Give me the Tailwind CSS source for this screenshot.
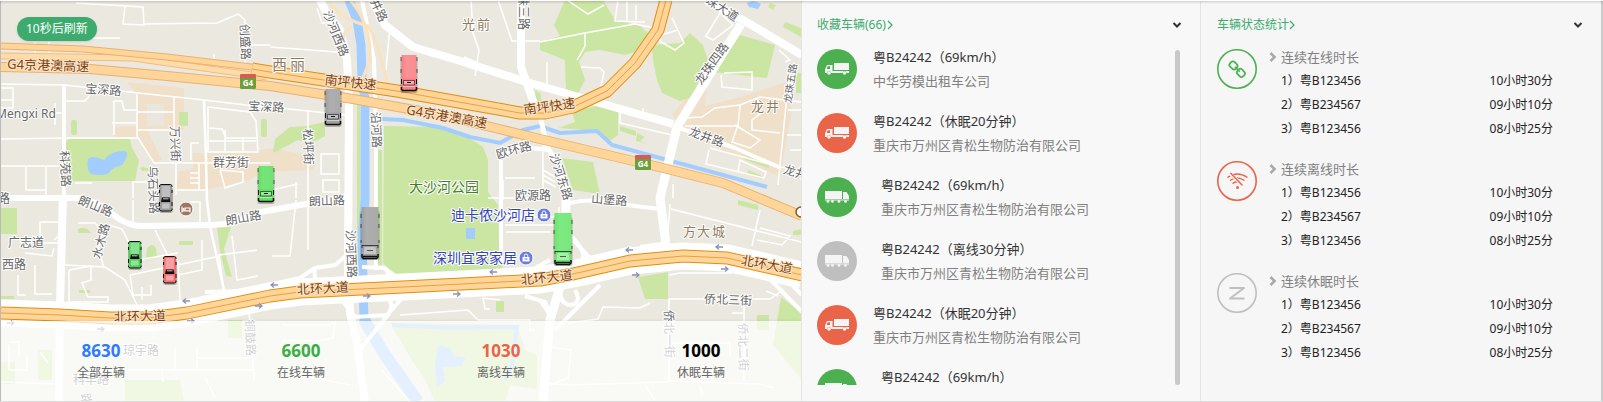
<!DOCTYPE html>
<html lang="zh-CN">
<head>
<meta charset="utf-8">
<meta name="viewport" content="width=device-width, initial-scale=1">
<title>车辆监控</title>
<script src="https://cdn.jsdelivr.net/npm/@tailwindcss/browser@4"></script>
</head>
<body class="font-['Noto_Sans','Noto_Sans_CJK_SC',sans-serif] text-[#333]">
<svg class="hidden" aria-hidden="true">
  <defs>
    <symbol id="truck-left" viewBox="0 0 24 12"><path fill="#f4f4f4" fill-rule="evenodd" d="M9 0h15v7H9zM2 2h5.500v6H24v2h-2.500a2 2 0 0 0-4 0H6a2 2 0 0 0-4 0H0V6.500zM2.600 3.200 1.800 6H5V3.200z"/><circle cx="4" cy="10" r="1.800" fill="#f4f4f4"/><circle cx="19.500" cy="10" r="1.800" fill="#f4f4f4"/></symbol>
    <symbol id="truck-right" viewBox="0 0 24 12"><path fill="#f4f4f4" d="M0 0h17v8H0zM18 1h3.500L24 5v3h-6zM0 8.600h24v1H0z"/><g fill="#f4f4f4"><circle cx="3" cy="10.400" r="1.400"/><circle cx="7.500" cy="10.400" r="1.400"/><circle cx="14" cy="10.400" r="1.400"/><circle cx="20.500" cy="10.400" r="1.400"/></g></symbol>
    <symbol id="chev-down" viewBox="0 0 10 10"><path d="M1.500 3 5 6.500 8.500 3" fill="none" stroke="#333" stroke-width="2"/></symbol>
    <symbol id="chev-bold" viewBox="0 0 8 10"><path d="M1.500 1 5.500 5 1.500 9" fill="none" stroke="#a8a8a8" stroke-width="2.600"/></symbol>
    <symbol id="chev-thin" viewBox="0 0 6 10"><path d="M1 1 5 5 1 9" fill="none" stroke="#3cab6d" stroke-width="1.200"/></symbol>
  </defs>
</svg>

<main class="grid min-h-screen grid-cols-[801fr_399fr_403fr] border-b border-[#dcdcdc]">

  <!-- Map -->
  <section class="relative flex flex-col items-start justify-between overflow-hidden border-l border-[#bbb] bg-[#ebe9df]" aria-label="地图">
    <svg class="absolute inset-0 h-full w-full" viewBox="1 0 800 401" preserveAspectRatio="xMinYMin slice">
      <!-- Built-up areas -->
      <g fill="#f0e0ca">
        <path d="M127 82 184 88V130H147L162 160 153 163 137 137H114V127H137V95Z"/>
        <path d="M193 153 240 153 275 148 315 158 313 170 262 172 250 180 205 190H176L178 172 193 168Z"/>
        <path d="M695 87 707 85 705 106 740 97 786 82 792 110 780 177 685 133 672 115Z"/>
      </g>
      <path d="M147 104h17v22h-17z" fill="#e8e6dd"/>
      <!-- Parks -->
      <g fill="#cbe6a3">
        <path d="M66 142Q67 139 70 139H130L132 148 139 160 135 181H66Z"/>
        <rect x="71" y="120" width="6" height="15" rx="2"/><rect x="179" y="112" width="9" height="14"/><rect x="261" y="119" width="6" height="18" rx="2"/>
        <path d="M140 168q4-3 5 0 3-1 4 2-3 3-4 0-3 3-5-2Z"/>
        <path d="M275 139 290 127 306 126 325 122V136L312 143 298 140 273 153Z"/>
        <path d="M384 126 440 127 462 133 483 147 488 160V192L498 205 499 240 503 270 398 278 383 263Z"/>
        <path d="M357 96h3v170h-3zM378 150h4v115h-4z"/>
        <path d="M565 0H603L615 20 640 26 650 35 640 50 625 55 600 50 585 52 579 62 585 80 575 100 566 93 565 60 540 50V42L560 36 554 25Z"/>
        <path d="M652 45 680 43 690 33 703 45 708 60 692 97 680 101 662 93 657 80 653 60Z"/>
        <path d="M740 35 775 45 767 78 713 72 725 57Z"/>
        <path d="M572 112 600 105 618 108V135L608 142 597 131 558 128 575 122Z"/>
        <path d="M562 158 593 162 600 194 573 190Z"/>
        <path d="M620 126 636 131V136L620 131ZM637 133 645 137 640 141 648 144 636 141Z"/>
        <path d="M785 22 801 28V37L783 27ZM796 73h6v20h-6zM770 3l6 2-3 5-5-3ZM535 90l6 4v10l-5-4Z"/>
        <path d="M746 156 769 164V168L745 160ZM748 170 762 176V179L747 174Z"/>
        <path d="M1 208h16v26H1zM78 229q8-4 13 4h-13zM147 248q6-6 9 0l1 9-11 3ZM179 241h14v4h-14zM217 227h14l-7 22 8 28-6-1-6-25Z"/>
        <path d="M1 296h13v3H1zM79 290h11v3H79z"/>
        <path d="M638 277 668 272V299H645ZM781 297 802 313V380L773 345ZM757 315h12v15h-12zM496 301h8v11h-8zM738 200l20 5v5l-20-5ZM793 231l8-2v6h-8z"/>
        <path d="M125 380H180L184 402H125ZM228 320h14v18h-14zM38 350h14v30H38zM1 362h14v22H1z"/>
        <path d="M390 323 517 325 525 350 537 355V389L510 385 505 402H435L425 380 410 357Z"/>
      </g>
      <!-- Water -->
      <g fill="#a3ccff">
        <path d="M88 159C92 155 98 158 104 160 110 152 118 151 125 151 129 152 127 158 122 165 116 167 112 168 109 173 105 176 95 175 91 174 87 170 87 163 88 159Z"/>
        <path d="M747 3q6-4 14 1l-3 5-9-2ZM466 228h9v11h-9z"/>
        <path d="M438 345l12 3 4 8 12 2-5 8-18 1 2 14-8 6-2-22Z"/>
      </g>
      <g fill="none" stroke="#a3ccff">
        <path stroke-width="9" d="M349 0 357 20 361 45 362 80 365 100V200L362 240 364 322"/>
        <path stroke-width="12" d="M364 320 385 355 418 402"/>
        <path stroke-width="4" d="M382 119 403 120 443 128 470 137 500 143 523 130 540 126 560 133 597 131 612 145 767 187"/>
        <path stroke-width="4" d="M392 325 450 328 517 327 512 365 505 380"/>
      </g>
      <!-- Side streets -->
      <g fill="none" stroke="#fff" stroke-width="1.500">
        <path d="M76 3 143 7 144 25 123 24 125 6M144 24 217 23 238 14 245 20V70M245 45H270M50 38H120M35 42V54M49 42V54M214 54V62"/>
        <path d="M1 84 64 85 204 100 270 108M64 101H85L90 95M1 88h12v20H1M13 100H1M55 103v22M55 113h9M114 135V101H122L124 110H137M112 123H137M137 94V136L154 163M137 112H174M174 96V130H138M174 130V155M1 139 66 138H137"/>
        <path d="M208 107 250 112 256 121 258 152H208ZM208 128 222 129 226 138H258M208 141H256M225 130V152M243 137V152"/>
        <path d="M154 163H270M176 163V195M191 160V143H199M199 163V190M190 173H200M190 178H200M190 183H200M176 190H207M220 170 243 172V182L225 188 220 170M26 166V190H46V166M46 166V198M1 166H64M75 183H92M133 198V182H153"/>
        <path stroke-width="2.500" d="M204 100 206 160 207 200 210 226 224 290"/>
        <path d="M270 47 337 52M317 8 322 23 336 22M308 110V250M271 107 345 115M321 154H339V174H321ZM323 180H339V192H323ZM272 190 298 184M296 182V198M296 200 290 256H272"/>
        <path d="M471 0 473 33 479 50 475 76M464 57 480 64M498 0 512 41H540M390 25 386 70M499 0V2"/>
        <path d="M567 0 588 14 604 5M540 42 585 33 585 46 577 60M585 33 635 24 655 28M581 67 600 68 604 72 600 92M547 62V85M618 0 615 21 645 22M627 0V22M636 5V20M655 28 661 42 675 50 684 43 672 18M661 35 678 30"/>
        <path d="M706 36 720 13 733 25M705 36 713 40 733 25M721 75 722 87 752 90V72L724 73M779 50 790 60 785 62M790 65 778 185M765 110 752 120V130L780 133M685 118 702 117 715 108 740 105 760 97 801 102M685 126 738 126 740 106M735 125 760 140 750 148 732 142 738 125M788 110H801M787 135H801M790 150H801M710 148 780 167 801 170M709 150 706 164 764 178 766 172 740 160 738 172M620 113V123L672 135M643 115V108M673 184V198"/>
        <path d="M543 145V193M503 180V200M505 178H535M488 198H540M543 170 555 177M543 175 555 182M543 180 556 187M505 217H560M505 225H555M506 232H550M559 207V240"/>
        <path d="M64 232V222H40V243H58M64 232 54 240M25 253 52 256 54 248M35 265V294H52M18 275V295H26M64 265 105 267 125 280 138 307M78 223H95L103 232 98 248 104 268M109 225 122 229 138 260 178 253M133 200V224M155 230 168 256 178 262 180 300M130 275 220 256M130 275 133 295H151V285M142 300V287M69 270V302H108V297H88L82 283 91 280V266L69 270M178 275 202 270V240M224 292 219 255 257 250M232 236 237 280 258 276M190 202H200V226"/>
        <path d="M9 345V370H27V355M9 342H19V355M40 352 48 363M175 348V370H197V348M197 358H250M249 310 254 380M100 370H255M162 368 163 382M1 382 55 384M205 377 215 398M282 325H330L335 322 333 338 318 341 282 340V352M272 370 350 385M382 370 410 402M400 315 468 310 478 320H530V330H535M500 300 483 298 485 309 490 309"/>
        <path d="M669 299 668 350M669 275 680 273H732M669 299H770L783 290M766 291 778 296M744 303V380M732 313H744M668 343H730V356M568 323 598 319 603 307 640 308 650 303M550 347 571 350 568 378 550 385M668 381 760 384 774 388M645 385 655 400M669 345V382M700 385 702 395M668 230 670 204M671 209 801 242M760 210 752 246M760 228 790 236 782 245 757 240M540 383 570 385 668 382"/>
      </g>
      <!-- Ramps and interchanges -->
      <g fill="none" stroke="#fff" stroke-width="4">
        <path d="M268 285 300 278 315 268 335 265 347 255M315 270Q312 280 325 283M362 267 384 268 398 278M385 268Q393 280 385 285M340 298 355 317 387 315 403 297M387 298Q395 303 388 315L362 347 357 345"/>
        <path d="M570 235Q590 255 580 262L560 266M573 240 590 258 632 248M550 260 535 268M525 296 545 302 553 322M575 290Q582 302 572 305 560 305 560 290M600 285 555 330M540 300 550 315"/>
        <path d="M205 292 290 290M640 247 669 243M769 278 802 312M787 280 802 295"/>
      </g>
      <!-- Main roads -->
      <g fill="none" stroke="#fff" stroke-linejoin="round">
        <path stroke-width="4" d="M64 84V200"/>
        <path stroke-width="8" d="M63 195 60 305 59 402M320 0 327 14 340 30 347 60 349 100 348 270 350 313 357 343 365 402"/>
        <path stroke-width="6" d="M1 198H82L105 207Q122 225 140 226L212 225Q235 225 255 213L345 197"/>
        <path stroke-width="8" d="M372 0 385 25 413 47 457 60 530 83 673 124"/>
        <path stroke-width="8" d="M802 55 743 20 706 0"/>
        <path stroke-width="9" d="M741 24 700 90 677 127 660 198 666 245"/>
        <path stroke-width="8" d="M521 0V67L538 115"/>
        <path stroke-width="5" d="M540 115 547 147 560 167 567 200"/>
        <path stroke-width="9" d="M566 198 565 270 550 320 543 402"/>
        <path stroke-width="4" d="M362 0 374 60 376 130V270M570 203Q590 198 610 203L660 209M501 160V265M502 158Q510 148 522 147L550 150M677 127 735 148 781 168"/>
      </g>
      <g fill="none" stroke="#fbe2bf" stroke-width="3">
        <path d="M330 2Q338 18 368 26 380 45 388 88M350 0Q372 25 370 60L362 80M345 50Q340 30 352 27"/>
      </g>
      <!-- Beihuan Avenue -->
      <g fill="none" stroke-linejoin="round">
        <path stroke="#fff" stroke-width="27" d="M1 313 60 315 110 318H150L187 313 270 296 300 292 403 287 540 280 573 274 630 261 683 256 727 258 802 275"/>
        <path stroke="#e08e10" stroke-width="13" d="M1 313 60 315 110 318H150L187 313 270 296 300 292 403 287 540 280 573 274 630 261 683 256 727 258 802 275"/>
        <path stroke="#ffd599" stroke-width="11" d="M1 313 60 315 110 318H150L187 313 270 296 300 292 403 287 540 280 573 274 630 261 683 256 727 258 802 275"/>
        <path stroke="#e8a23c" d="M1 313 60 315 110 318H150L187 313 270 296 300 292 403 287 540 280 573 274 630 261 683 256 727 258 802 275"/>
      </g>
      <!-- Expressways -->
      <g fill="none" stroke-linejoin="round">
        <path stroke="#eebd84" stroke-width="7" d="M1 56 133 58 267 77"/><path stroke="#ffdba8" stroke-width="5" d="M1 56 133 58 267 77"/>
        <path stroke="#eab070" stroke-width="7" d="M1 46 83 49 167 57 260 68"/><path stroke="#ffd599" stroke-width="5" d="M1 46 83 49 167 57 260 68"/>
        <path stroke="#eab070" stroke-width="10" d="M1 67 90 69 167 76 270 86 353 99 437 114 540 139 663 168 723 183 802 216"/>
        <path stroke="#ffd599" stroke-width="8" d="M1 67 90 69 167 76 270 86 353 99 437 114 540 139 663 168 723 183 802 216"/>
        <path stroke="#e08e10" stroke-width="13" d="M252 69 270 72 397 91 470 104 520 113 545 113 573 107 607 91 635 63 658 30 666 0"/>
        <path stroke="#ffd599" stroke-width="11" d="M252 69 270 72 397 91 470 104 520 113 545 113 573 107 607 91 635 63 658 30 666 0"/>
        <path stroke="#e8a23c" d="M252 69 270 72 397 91 470 104 520 113 545 113 573 107 607 91 635 63 658 30 666 0"/>
      </g>
      <!-- One-way arrows -->
      <g fill="none" stroke="#8b93b8" stroke-width="1.300">
        <path d="M190 301h-7m3-2.500-3 2.500 3 2.500M278 285h-7m3-2.500-3 2.500 3 2.500M497 272h-7m3-2.500-3 2.500 3 2.500M633 250h-7m3-2.500-3 2.500 3 2.500M723 247h-7m3-2.500-3 2.500 3 2.500"/>
        <path d="M7 323h7m-3-2.500 3 2.500-3 2.500M97 329h7m-3-2.500 3 2.500-3 2.500M187 321h7m-3-2.500 3 2.500-3 2.500M255 306h7m-3-2.500 3 2.500-3 2.500M363 296h7m-3-2.500 3 2.500-3 2.500M453 294h7m-3-2.500 3 2.500-3 2.500M632 275h7m-3-2.500 3 2.500-3 2.500M721 269h7m-3-2.500 3 2.500-3 2.500"/>
      </g>
      <!-- Street labels -->
      <g font-size="12" fill="#666" stroke="#fff" stroke-width="2" stroke-linejoin="round" paint-order="stroke" text-anchor="middle">
        <text transform="translate(103 94) rotate(4)">宝深路</text>
        <text x="26" y="118">Mengxi Rd</text>
        <text transform="translate(241 42) rotate(88)">创盛路</text>
        <text transform="translate(266 111) rotate(3)">宝深路</text>
        <text transform="translate(61 169) rotate(87)">科苑路</text>
        <text transform="translate(171 144) rotate(88)">万兴街</text>
        <text x="231" y="167">群芳街</text>
        <text transform="translate(149 190) rotate(88)">乌石头路</text>
        <text transform="translate(94 210) rotate(22)">朗山路</text>
        <text x="4" y="203">路</text>
        <text transform="translate(244 222) rotate(-10)">朗山路</text>
        <text transform="translate(327 205) rotate(-2)">朗山路</text>
        <text transform="translate(105 242) rotate(-75)">水木路</text>
        <text x="26" y="247">广志道</text>
        <text x="14" y="269">西路</text>
        <text x="141" y="355">琼宇路</text>
        <text x="91" y="384">科丰路</text>
        <text transform="translate(82 400) rotate(80)">路</text>
        <text transform="translate(246 338) rotate(88)">铜鼓路</text>
        <text transform="translate(332 35) rotate(68)">沙河西路</text>
        <text transform="translate(347 254) rotate(88)">沙河西路</text>
        <text transform="translate(375 12) rotate(65)">井路</text>
        <text transform="translate(519 12) rotate(90)">珠三路</text>
        <text transform="translate(372 130) rotate(88)">沿河路</text>
        <text transform="translate(304 147) rotate(88)">松坪街</text>
        <text transform="translate(515 154) rotate(-15)">欧环路</text>
        <text x="533" y="200">欧源路</text>
        <text transform="translate(557 178) rotate(72)">沙河东路</text>
        <text transform="translate(609 204) rotate(4)">山堡路</text>
        <text transform="translate(720 12) rotate(32)">珠大道</text>
        <text transform="translate(715 66) rotate(-54)">龙珠四路</text>
        <text transform="translate(794 84) rotate(-82)" font-size="10">龙珠五路</text>
        <text transform="translate(705 141) rotate(20)">龙井路</text>
        <text transform="translate(800 178) rotate(16)">龙井路</text>
        <text transform="translate(728 304) rotate(2)">侨北三街</text>
        <text transform="translate(665 334) rotate(89)">侨北一街</text>
        <text transform="translate(739 347) rotate(89)">侨北二街</text>
      </g>
      <g font-size="13" fill="#7a3f12" stroke="#ffe9cc" stroke-width="2" stroke-linejoin="round" paint-order="stroke" text-anchor="middle">
        <text transform="translate(48 70) rotate(2)">G4京港澳高速</text>
        <text transform="translate(446 121) rotate(10)">G4京港澳高速</text>
        <text transform="translate(350 87) rotate(6)">南坪快速</text>
        <text transform="translate(550 111) rotate(-8)">南坪快速</text>
        <text transform="translate(140 321) rotate(-2)">北环大道</text>
        <text transform="translate(323 293) rotate(-3)">北环大道</text>
        <text transform="translate(547 282) rotate(-6)">北环大道</text>
        <text transform="translate(766 269) rotate(10)">北环大道</text>
      </g>
      <g font-size="13" fill="#8f7a5c" stroke="#fff" stroke-width="2" stroke-linejoin="round" paint-order="stroke">
        <text y="70" font-size="15"><tspan x="272">西</tspan><tspan x="290">丽</tspan></text>
        <text y="29"><tspan x="462">光</tspan><tspan x="477">前</tspan></text>
        <text y="111"><tspan x="751">龙</tspan><tspan x="766">井</tspan></text>
        <text y="236"><tspan x="683">方</tspan><tspan x="697">大</tspan><tspan x="712">城</tspan></text>
      </g>
      <g font-size="14" stroke="#fff" stroke-width="2" stroke-linejoin="round" paint-order="stroke">
        <text x="409" y="192" fill="#3f8020">大沙河公园</text>
        <text x="451" y="220" fill="#3543b5">迪卡侬沙河店</text>
        <text x="433" y="263" fill="#3543b5">深圳宜家家居</text>
      </g>
      <!-- Points of interest -->
      <g id="poi-shop" transform="translate(544 215)"><circle r="7" fill="#6a7be0" stroke="#fff"/><path d="M-3.500-1h7v4.500h-7z" fill="#fff"/><path d="M-1.800-1v-1.200a1.800 1.800 0 0 1 3.600 0V-1" fill="none" stroke="#fff"/><path d="M-1.500 1h3" stroke="#6a7be0"/></g>
      <use href="#poi-shop" x="-18" y="43"/>
      <g transform="translate(186 209)"><circle r="7" fill="#a07560" stroke="#fff"/><path d="M-4-2.500v6M-4 1.800h8v1.700M4 1.800V-1h-5v2.800" fill="none" stroke="#fff" stroke-width="1.200"/><circle cx="-2.500" r="1" fill="#fff"/></g>
      <circle cx="801" cy="212" r="5" fill="#fff" stroke="#8a5428" stroke-width="1.500"/>
      <g id="g4" transform="translate(240 74)"><rect width="16" height="15" rx="1.500" fill="#6ba03c"/><path d="M0 4V1.500Q0 0 1.500 0h13Q16 0 16 1.500V4Z" fill="#d85a55"/><text x="8" y="12" font-size="8" font-weight="700" fill="#fff" text-anchor="middle">G4</text></g>
      <use href="#g4" x="395" y="81"/>
      <!-- Vehicles -->
      <defs>
        <linearGradient id="shine"><stop offset="0" stop-color="#fff" stop-opacity="0"/><stop offset=".3" stop-color="#fff" stop-opacity=".15"/><stop offset="1" stop-color="#fff" stop-opacity=".1"/></linearGradient>
        <g id="truck">
          <rect x="-.5" y="4" width="17" height="34" rx="2" fill="#000" opacity=".25"/>
          <path d="M.2 2v4M15.800 2v4M.2 14v4M15.800 14v4" stroke="#111"/>
          <rect x=".5" width="15" height="24" fill="currentColor"/><rect x=".5" width="15" height="24" fill="url(#shine)"/>
          <path d="M.5 23.500h15V33l-1 2h-13l-1-2Z" fill="currentColor"/>
          <path d="M.5 24v5M15.500 24v5" stroke="#111"/>
          <path d="M2.500 25.500h11v4.500h-11z" fill="#fff" fill-opacity=".35" stroke="#111" stroke-opacity=".75" stroke-width=".8"/><path d="M6 27.500h4" stroke="#111"/>
          <path d="M2 31.500h12" stroke="#fff" stroke-opacity=".5"/>
          <path d="M.5 32v2.500l1.500 1h12l1.500-1V32" fill="none" stroke="#111" stroke-width="1.500"/>
        </g>
        <g id="lorry">
          <rect x="-.5" y="4" width="19" height="49" rx="2" fill="#000" opacity=".25"/>
          <path d="M.2 7v4M17.800 7v4M.2 17v4M17.800 17v4M.2 33v3M17.800 33v3" stroke="#111"/>
          <rect x=".5" width="17" height="38" fill="currentColor"/><rect x=".5" width="17" height="38" fill="url(#shine)"/>
          <path d="M1 38h16v11l-1 2.500H2L1 49Z" fill="currentColor"/>
          <path d="M1 38.500h16M1 38v3M17 38v3" stroke="#111" stroke-opacity=".7"/>
          <path d="M3.500 40h11l1 7h-13z" fill="#fff" fill-opacity=".4"/><path d="M6 43.500h6" stroke="#222" stroke-opacity=".7"/>
          <path d="M1 47v3l1.500 1.500h13L17 50v-3M2 49.500h14" fill="none" stroke="#111" stroke-width="1.500"/>
        </g>
        <g id="car">
          <rect x="0" y="3" width="14" height="26" rx="3" fill="#000" opacity=".25"/>
          <rect x=".5" y=".5" width="12.500" height="26.500" rx="2" fill="currentColor"/>
          <rect x="2.500" y="2" width="8.500" height="11" fill="#fff" fill-opacity=".35"/>
          <path d="M.5 3V1.500L2 .5h9.500l1.500 1V3M.5 6v3M13 6v3M.5 18v4M13 18v4M.5 24.500V26l1.500 1h9.500l1.500-1v-1.500" fill="none" stroke="#111"/>
          <path d="M2 18h9.500l-1-4.500H3Z" fill="#111"/><path d="M4 14.800h5.500" stroke="#fff" stroke-width=".8"/><rect x="3" y="19.500" width="7.500" height="5" fill="#fff" fill-opacity=".4"/>
        </g>
      </defs>
      <use href="#truck" x="401" y="55" color="#f97f83"/>
      <use href="#truck" x="325" y="89" color="#a0a0a0"/>
      <use href="#truck" x="258" y="166" color="#5fe062"/>
      <use href="#lorry" x="361" y="207" color="#a0a0a0"/>
      <use href="#lorry" x="554" y="213" color="#68e66c"/>
      <use href="#car" x="128" y="241" color="#4ccf58"/>
      <use href="#car" x="163" y="256" color="#f56c70"/>
      <use href="#car" x="159" y="184" color="#9c9c9c"/>
    </svg>

    <p class="relative mt-[17px] ml-4 flex h-6 items-center rounded-full bg-[#3cab6d] px-[9px] text-xs text-white shadow-sm">10秒后刷新</p>

    <dl class="relative grid h-20 w-full grid-cols-4 bg-white/70 pt-[18px] text-center shadow-[0_-1px_2px_rgba(0,0,0,0.06)]">
      <div class="flex flex-col-reverse justify-end"><dt class="text-xs leading-5 text-[#666]">全部车辆</dt><dd class="text-[17px] leading-6 font-bold text-[#2d7bff]">8630</dd></div>
      <div class="flex flex-col-reverse justify-end"><dt class="text-xs leading-5 text-[#666]">在线车辆</dt><dd class="text-[17px] leading-6 font-bold text-[#3aae45]">6600</dd></div>
      <div class="flex flex-col-reverse justify-end"><dt class="text-xs leading-5 text-[#666]">离线车辆</dt><dd class="text-[17px] leading-6 font-bold text-[#ea6449]">1030</dd></div>
      <div class="flex flex-col-reverse justify-end"><dt class="text-xs leading-5 text-[#666]">休眠车辆</dt><dd class="text-[17px] leading-6 font-bold text-black">1000</dd></div>
    </dl>
  </section>

  <!-- Favourite vehicles -->
  <section class="flex flex-col border-l border-[#e4e4e4] bg-[#f8f8f8] pt-[15px] pl-[15px]">
    <header class="mb-[10px] flex h-5 items-center justify-between pr-[18px]">
      <a href="#" class="flex items-center gap-px text-xs text-[#3cab6d]">收藏车辆(66)<svg class="h-[10px] w-[6px]"><use href="#chev-thin"/></svg></a>
      <button type="button" aria-label="展开收藏车辆" class="cursor-pointer"><svg class="size-[10px]"><use href="#chev-down"/></svg></button>
    </header>
    <div class="flex h-[340px] justify-between pr-5">
      <ul class="flex flex-1 flex-col gap-4 overflow-hidden text-[13px] leading-6 text-[#808080]">
        <li class="flex h-12 shrink-0 items-center gap-4"><span class="flex size-10 items-center justify-center rounded-full bg-[#4cb050]"><svg class="h-3 w-6"><use href="#truck-left"/></svg></span><div><h3 class="text-[#333]">粤B24242（69km/h）</h3><p>中华劳模出租车公司</p></div></li>
        <li class="flex h-12 shrink-0 items-center gap-4"><span class="flex size-10 items-center justify-center rounded-full bg-[#ea6449]"><svg class="h-3 w-6"><use href="#truck-left"/></svg></span><div><h3 class="text-[#333]">粤B24242（休眠20分钟）</h3><p>重庆市万州区青松生物防治有限公司</p></div></li>
        <li class="flex h-12 shrink-0 items-center gap-6"><span class="flex size-10 items-center justify-center rounded-full bg-[#4cb050]"><svg class="h-3 w-6"><use href="#truck-right"/></svg></span><div><h3 class="text-[#333]">粤B24242（69km/h）</h3><p>重庆市万州区青松生物防治有限公司</p></div></li>
        <li class="flex h-12 shrink-0 items-center gap-6"><span class="flex size-10 items-center justify-center rounded-full bg-[#bfbfbf]"><svg class="h-3 w-6"><use href="#truck-right"/></svg></span><div><h3 class="text-[#333]">粤B24242（离线30分钟）</h3><p>重庆市万州区青松生物防治有限公司</p></div></li>
        <li class="flex h-12 shrink-0 items-center gap-4"><span class="flex size-10 items-center justify-center rounded-full bg-[#ea6449]"><svg class="h-3 w-6"><use href="#truck-left"/></svg></span><div><h3 class="text-[#333]">粤B24242（休眠20分钟）</h3><p>重庆市万州区青松生物防治有限公司</p></div></li>
        <li class="flex h-12 shrink-0 items-center gap-6"><span class="flex size-10 items-center justify-center rounded-full bg-[#4cb050]"><svg class="h-3 w-6"><use href="#truck-right"/></svg></span><div><h3 class="text-[#333]">粤B24242（69km/h）</h3><p>重庆市万州区青松生物防治有限公司</p></div></li>
      </ul>
      <div class="mt-[5px] w-[5px] rounded-full bg-[#c9c9c9]"></div>
    </div>
  </section>

  <!-- Status statistics -->
  <section class="flex flex-col border-r-2 border-l border-r-[#ccc] border-l-[#e4e4e4] bg-[#f6f6f6] pt-[15px] pl-4">
    <header class="mb-[10px] flex h-5 items-center justify-between pr-[18px]">
      <a href="#" class="flex items-center text-xs text-[#3cab6d]">车辆状态统计<svg class="h-[10px] w-[6px]"><use href="#chev-thin"/></svg></a>
      <button type="button" aria-label="展开车辆状态统计" class="cursor-pointer"><svg class="size-[10px]"><use href="#chev-down"/></svg></button>
    </header>
    <div class="flex flex-col gap-4 pr-12 text-xs leading-6 text-[#222]">
      <article class="flex gap-3">
        <svg class="mt-1 size-10 shrink-0" viewBox="0 0 40 40" fill="none" stroke="#4cb050"><circle cx="20" cy="20" r="19.200" stroke-width="1.600"/><g transform="rotate(45 20 20)" stroke-width="1.700"><rect x="11" y="16.800" width="8" height="6.400" rx="2.600"/><rect x="21.500" y="16.800" width="8" height="6.400" rx="2.600"/><path d="M17 20h7" stroke-width="1.500"/></g></svg>
        <div class="flex-1">
          <h3 class="flex items-center gap-1 text-[13px] leading-6 text-[#808080]"><svg class="h-[10px] w-2"><use href="#chev-bold"/></svg>连续在线时长</h3>
          <table class="w-full"><tbody>
            <tr><td class="pl-3">1）粤B123456</td><td class="text-right">10小时30分</td></tr>
            <tr><td class="pl-3">2）粤B234567</td><td class="text-right">09小时10分</td></tr>
            <tr><td class="pl-3">3）粤B123456</td><td class="text-right">08小时25分</td></tr>
          </tbody></table>
        </div>
      </article>
      <article class="flex gap-3">
        <svg class="mt-1 size-10 shrink-0" viewBox="0 0 40 40" fill="none" stroke="#ea6449"><circle cx="20" cy="20" r="19.200" stroke-width="1.600"/><path d="M10.500 16.500Q20 9.500 30.500 16.500M13 19.500Q20 14.500 27.500 19.500M15.500 22.500Q20 19 25 22.500" stroke-width="1.500"/><path d="M12 12 26 24" stroke="#f6f6f6" stroke-width="3.500"/><path d="M13.500 12 25.500 24.500" stroke-width="1.500"/><circle cx="20.500" cy="26.500" r="1.500" fill="#ea6449" stroke="none"/></svg>
        <div class="flex-1">
          <h3 class="flex items-center gap-1 text-[13px] leading-6 text-[#808080]"><svg class="h-[10px] w-2"><use href="#chev-bold"/></svg>连续离线时长</h3>
          <table class="w-full"><tbody>
            <tr><td class="pl-3">1）粤B123456</td><td class="text-right">10小时30分</td></tr>
            <tr><td class="pl-3">2）粤B234567</td><td class="text-right">09小时10分</td></tr>
            <tr><td class="pl-3">3）粤B123456</td><td class="text-right">08小时25分</td></tr>
          </tbody></table>
        </div>
      </article>
      <article class="flex gap-3">
        <svg class="mt-1 size-10 shrink-0" viewBox="0 0 40 40" fill="none" stroke="#bfbfbf"><circle cx="20" cy="20" r="19.200" stroke-width="1.600"/><path d="M12.500 15H27L13 25.500H27.500" stroke-width="2" stroke-linejoin="round"/></svg>
        <div class="flex-1">
          <h3 class="flex items-center gap-1 text-[13px] leading-6 text-[#808080]"><svg class="h-[10px] w-2"><use href="#chev-bold"/></svg>连续休眠时长</h3>
          <table class="w-full"><tbody>
            <tr><td class="pl-3">1）粤B123456</td><td class="text-right">10小时30分</td></tr>
            <tr><td class="pl-3">2）粤B234567</td><td class="text-right">09小时10分</td></tr>
            <tr><td class="pl-3">3）粤B123456</td><td class="text-right">08小时25分</td></tr>
          </tbody></table>
        </div>
      </article>
    </div>
  </section>
</main>
<div class="pointer-events-none absolute inset-x-0 top-0 h-1 border-t border-white bg-linear-to-b from-black/15 to-transparent"></div>
</body>
</html>
